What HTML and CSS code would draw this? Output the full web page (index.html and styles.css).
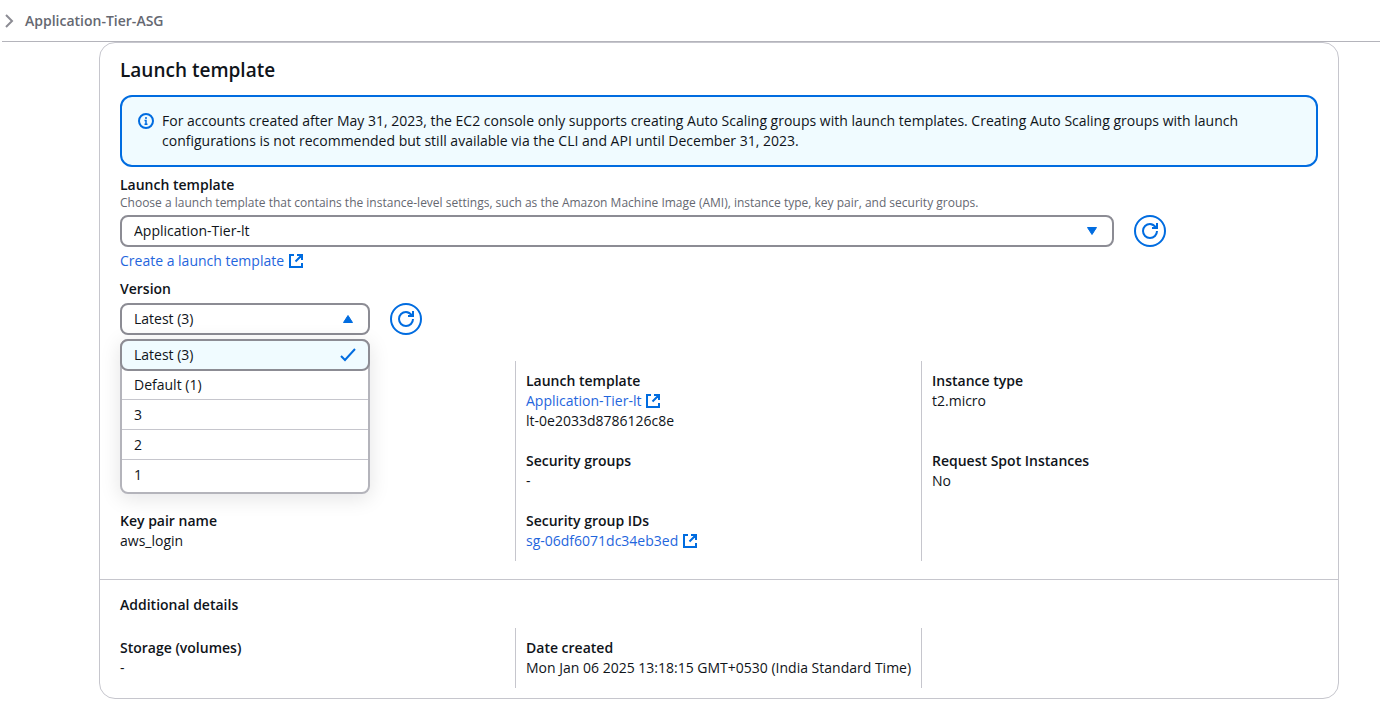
FILE: index.html
```html
<!DOCTYPE html>
<html lang="en">
<head>
<meta charset="utf-8">
<title>Launch template</title>
<link rel="stylesheet" href="styles.css">
</head>
<body>
<svg class="defs" aria-hidden="true">
  <symbol id="external" viewBox="0 0 16 16"><path d="M6 2H2v12h12v-4M9 2h5v5M7.500 8.500L14 2" fill="none" stroke="currentColor" stroke-width="2"/></symbol>
  <symbol id="refresh" viewBox="0 0 16 16"><path d="M15 8a7 7 0 1 1-7-7c3 0 4.500 1.500 6.500 4M15 0v5h-5" fill="none" stroke="currentColor" stroke-width="2"/></symbol>
</svg>
<header class="topbar">
  <svg class="chevron" viewBox="0 0 10 14" aria-hidden="true"><path d="M2 1l6 6-6 6" fill="none" stroke="currentColor" stroke-width="2"/></svg>
  <span class="topbar-title">Application-Tier-ASG</span>
</header>
<main class="page">
  <section class="card">
    <div class="card-main">
      <h1 class="title">Launch template</h1>
      <div class="alert" role="note">
        <svg class="icon" viewBox="0 0 16 16" aria-hidden="true"><circle cx="8" cy="8" r="7" fill="none" stroke="currentColor" stroke-width="2"/><path d="M8 4v2M6.500 7.500H8V11M6.500 11.200h3" fill="none" stroke="currentColor" stroke-width="1.500"/></svg>
        <p class="alert-text">For accounts created after May 31, 2023, the EC2 console only supports creating Auto Scaling groups with launch templates. Creating Auto Scaling groups with launch<br>configurations is not recommended but still available via the CLI and API until December 31, 2023.</p>
      </div>
      <div class="field">
        <label class="label" for="template">Launch template</label>
        <p class="hint">Choose a launch template that contains the instance-level settings, such as the Amazon Machine Image (AMI), instance type, key pair, and security groups.</p>
        <div class="control-row">
          <div class="select-wrap wide">
            <select class="select" id="template"><option>Application-Tier-lt</option></select>
            <svg class="caret" viewBox="0 0 16 16" aria-hidden="true"><path d="M3.500 4.500h9L8 11.500z" fill="currentColor" stroke="currentColor" stroke-linejoin="round"/></svg>
          </div>
          <button class="refresh" type="button" aria-label="Refresh launch templates"><svg class="icon" aria-hidden="true"><use href="#refresh"/></svg></button>
        </div>
        <a class="link" href="#">Create a launch template <svg class="icon" aria-hidden="true"><use href="#external"/></svg></a>
      </div>
      <div class="field">
        <label class="label" for="version">Version</label>
        <div class="control-row">
          <div class="select-wrap narrow">
            <select class="select" id="version"><option>Latest (3)</option></select>
            <svg class="caret" viewBox="0 0 16 16" aria-hidden="true"><path d="M3.500 11.500h9L8 4.500z" fill="currentColor" stroke="currentColor" stroke-linejoin="round"/></svg>
            <ul class="menu" role="listbox" aria-label="Version">
              <li class="option selected" role="option" aria-selected="true">Latest (3)<svg class="icon" viewBox="0 0 16 16" aria-hidden="true"><path d="M1 9l4 4L15 2" fill="none" stroke="currentColor" stroke-width="2"/></svg></li>
              <li class="option" role="option">Default (1)</li>
              <li class="option" role="option">3</li>
              <li class="option" role="option">2</li>
              <li class="option" role="option">1</li>
            </ul>
          </div>
          <button class="refresh" type="button" aria-label="Refresh versions"><svg class="icon" aria-hidden="true"><use href="#refresh"/></svg></button>
        </div>
      </div>
      <div class="details">
        <div class="cell"></div>
        <div class="cell"><h2 class="label">Launch template</h2><a class="link" href="#">Application-Tier-lt <svg class="icon" aria-hidden="true"><use href="#external"/></svg></a><p>lt-0e2033d8786126c8e</p></div>
        <div class="cell"><h2 class="label">Instance type</h2><p>t2.micro</p></div>
        <div class="cell"></div>
        <div class="cell"><h2 class="label">Security groups</h2><p>-</p></div>
        <div class="cell"><h2 class="label">Request Spot Instances</h2><p>No</p></div>
        <div class="cell"><h2 class="label">Key pair name</h2><p>aws_login</p></div>
        <div class="cell"><h2 class="label">Security group IDs</h2><a class="link" href="#">sg-06df6071dc34eb3ed <svg class="icon" aria-hidden="true"><use href="#external"/></svg></a></div>
        <div class="cell"></div>
      </div>
    </div>
    <div class="card-extra">
      <h2 class="label">Additional details</h2>
      <div class="details extra">
        <div class="cell"><h3 class="label">Storage (volumes)</h3><p>-</p></div>
        <div class="cell"><h3 class="label">Date created</h3><p>Mon Jan 06 2025 13:18:15 GMT+0530 (India Standard Time)</p></div>
        <div class="cell"></div>
      </div>
    </div>
  </section>
</main>
</body>
</html>
```
FILE: styles.css
```css
* { box-sizing: border-box; }
body, h1, h2, h3, p, ul { margin: 0; padding: 0; }
body {
  background: #fff;
  color: #0f141a;
  font: 14px/20px "Open Sans", sans-serif;
}
.defs { position: absolute; width: 0; height: 0; }
.icon { width: 16px; height: 16px; flex: none; color: #006ce0; }
.topbar {
  display: flex;
  align-items: center;
  gap: 11px;
  height: 42px;
  margin: 0 2px;
  padding-left: 2px;
  border-bottom: 1px solid #b4b4bb;
}
.chevron { width: 10px; height: 14px; color: #8c8c94; }
.topbar-title { color: #656871; font-size: 14px; font-weight: 600; }
.page { padding: 0 43px 11px 99px; }
.card { border: 1px solid #c6c6cd; border-radius: 16px; }
.card-main { padding: 15px 20px 18px; }
.title { font-size: 19px; line-height: 24px; font-weight: 600; }
.alert {
  display: flex;
  gap: 8px;
  margin: 13px 0 8px;
  padding: 14px 16px;
  border: 2px solid #006ce0;
  border-radius: 12px;
  background: #f0fbff;
}
.alert .icon { margin-top: 2px; }
.label { display: block; font-size: 14px; line-height: 20px; font-weight: 600; }
.hint { color: #656871; font-size: 12px; line-height: 16px; }
.control-row { display: flex; gap: 20px; margin: 4px 0; }
.select-wrap { position: relative; }
.wide { width: 83%; }
.narrow { width: 250px; }
.select {
  display: block;
  width: 100%;
  height: 32px;
  padding: 0 12px;
  border: 2px solid #8c8c94;
  border-radius: 8px;
  background: #fff;
  color: inherit;
  font: inherit;
  appearance: none;
}
.caret {
  position: absolute;
  top: 8px;
  right: 14px;
  width: 16px;
  height: 16px;
  color: #006ce0;
  pointer-events: none;
}
.refresh {
  display: flex;
  align-items: center;
  justify-content: center;
  width: 32px;
  height: 32px;
  padding: 0;
  border: 2px solid #006ce0;
  border-radius: 50%;
  background: #fff;
}
.link {
  display: flex;
  align-items: center;
  gap: 4px;
  color: #1f66dd;
  text-decoration: none;
}
.field + .field { margin-top: 8px; }
.menu {
  position: absolute;
  z-index: 1;
  top: 36px;
  left: 0;
  width: 100%;
  padding-bottom: 2px;
  border: 2px solid #b4b4bb;
  border-radius: 8px;
  background: #fff;
  list-style: none;
  box-shadow: 0 4px 20px 1px rgba(0, 7, 22, 0.1);
}
.option {
  display: flex;
  align-items: center;
  justify-content: space-between;
  height: 30px;
  padding: 0 12px;
  border-bottom: 1px solid #c6c6cd;
}
.option:last-child { border-bottom: 0; }
.option.selected {
  height: 32px;
  margin: -2px -2px -1px;
  border: 2px solid #8c8c94;
  border-radius: 8px;
  background: #f0fbff;
}
.details {
  display: grid;
  grid-template-columns: repeat(3, 1fr);
  grid-template-rows: auto 60px auto;
  column-gap: 20px;
  margin-top: 26px;
}
.cell { min-height: 60px; padding: 10px 0; }
.cell:not(:nth-child(3n + 1)) {
  margin-left: -11px;
  padding-left: 10px;
  border-left: 1px solid #c6c6cd;
}
.card-extra { padding: 15px 20px 10px; border-top: 1px solid #c6c6cd; }
.extra { grid-template-rows: auto; margin-top: 13px; }
```
